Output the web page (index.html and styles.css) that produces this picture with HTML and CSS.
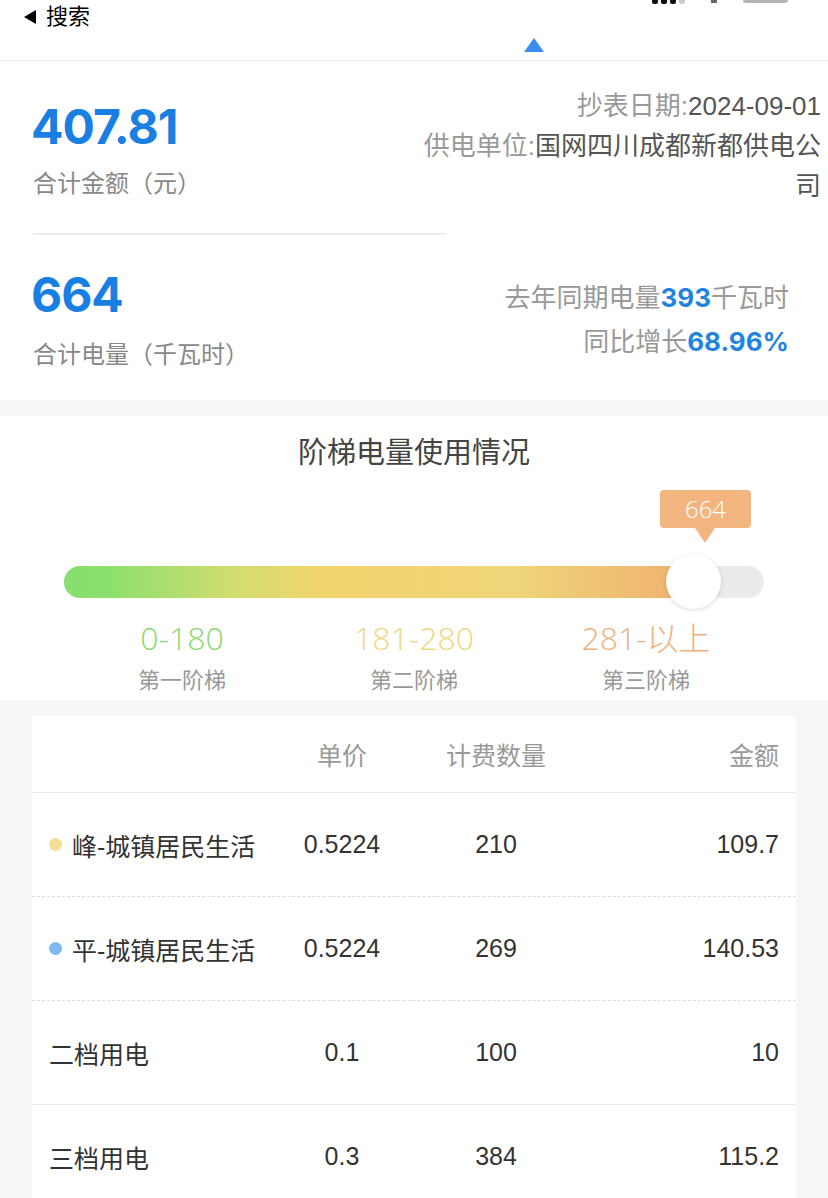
FILE: index.html
```html
<!DOCTYPE html>
<html>
<head>
    <meta charset="utf-8">
    <link rel="stylesheet" href="styles.css">
    <meta name="viewport" content="width=device-width, initial-scale=1.0">
    <title>电费账单</title>
</head>
<body>
    <div class="topbar">
        <div class="status">
            <div class="back"><span class="back-arrow"></span>搜索</div>
            <div class="sys">
                <span class="signal"><i></i><i></i><i></i><i class="off"></i></span>
                <span class="wifi"></span>
                <span class="battery"></span>
            </div>
        </div>
        <div class="pull"><span class="tri"></span></div>
    </div>

    <div class="summary">
        <div class="sum-row first">
            <div class="sum-left">
                <div class="big">407.81</div>
                <div class="cap">合计金额（元）</div>
            </div>
            <div class="sum-right">
                <p><span class="lbl">抄表日期:</span><span class="val">2024-09-01</span></p>
                <p><span class="lbl">供电单位:</span><span class="val">国网四川成都新都供电公司</span></p>
            </div>
        </div>
        <div class="sum-row second">
            <div class="sum-left">
                <div class="big">664</div>
                <div class="cap">合计电量（千瓦时）</div>
            </div>
            <div class="sum-right">
                <p>去年同期电量<b>393</b>千瓦时</p>
                <p>同比增长<b>68.96%</b></p>
            </div>
        </div>
    </div>

    <div class="tier">
        <h2 class="tier-title">阶梯电量使用情况</h2>
        <div class="meter">
            <div class="fill" style="width: 90%;"></div>
            <div class="tip" style="left: calc(90% + 12px);">664</div>
            <div class="knob" style="left: 90%;"></div>
        </div>
        <div class="tier-labels">
            <div class="tier-item t1">
                <div class="range">0-180</div>
                <div class="name">第一阶梯</div>
            </div>
            <div class="tier-item t2">
                <div class="range">181-280</div>
                <div class="name">第二阶梯</div>
            </div>
            <div class="tier-item t3">
                <div class="range">281-以上</div>
                <div class="name">第三阶梯</div>
            </div>
        </div>
    </div>

    <div class="bill">
        <div class="bill-row head">
            <div></div>
            <div class="c">单价</div>
            <div class="c">计费数量</div>
            <div class="r">金额</div>
        </div>
        <div class="bill-row dashed">
            <div class="item"><span class="dot peak"></span>峰-城镇居民生活</div>
            <div class="c">0.5224</div>
            <div class="c">210</div>
            <div class="r">109.7</div>
        </div>
        <div class="bill-row dashed">
            <div class="item"><span class="dot flat"></span>平-城镇居民生活</div>
            <div class="c">0.5224</div>
            <div class="c">269</div>
            <div class="r">140.53</div>
        </div>
        <div class="bill-row">
            <div class="item">二档用电</div>
            <div class="c">0.1</div>
            <div class="c">100</div>
            <div class="r">10</div>
        </div>
        <div class="bill-row last">
            <div class="item">三档用电</div>
            <div class="c">0.3</div>
            <div class="c">384</div>
            <div class="r">115.2</div>
        </div>
    </div>
</body>
</html>
```

FILE: styles.css
```css
body{
    margin: 0;
    background: #f6f6f6;
    font-family: "Liberation Sans", "Noto Sans CJK SC", sans-serif;
    color: #333;
}
p, h2{
    margin: 0;
}

/* top bar */
.topbar{
    background: #fff;
    height: 60px;
    border-bottom: 1px solid #f0f0f0;
}
.status{
    display: flex;
    justify-content: space-between;
    align-items: flex-start;
    padding: 0 40px 0 24px;
    height: 34px;
}
.back{
    display: flex;
    align-items: center;
    margin-top: 3px;
    font-size: 22px;
    line-height: 28px;
    color: #000;
}
.back-arrow{
    width: 0;
    height: 0;
    border-top: 7px solid transparent;
    border-bottom: 7px solid transparent;
    border-right: 12px solid #000;
    margin-right: 10px;
}
.sys{
    display: flex;
    align-items: flex-start;
    gap: 26px;
}
.signal{
    display: flex;
    gap: 3px;
}
.signal i{
    width: 6px;
    height: 4px;
    background: #111;
    border-radius: 0 0 2px 2px;
}
.signal i.off{
    background: #ccc;
}
.wifi{
    width: 6px;
    height: 3px;
    background: #666;
}
.battery{
    width: 45px;
    height: 3px;
    background: #b5b5b5;
    border-radius: 0 0 4px 4px;
}
.pull{
    padding-left: 524px;
    height: 26px;
}
.tri{
    display: block;
    width: 0;
    height: 0;
    margin-top: 4px;
    border-left: 10px solid transparent;
    border-right: 10px solid transparent;
    border-bottom: 14px solid #3a8ef0;
}

/* summary */
.summary{
    background: #fff;
    padding: 0 7px 0 33px;
}
.sum-row{
    display: flex;
    justify-content: space-between;
    align-items: center;
}
.sum-left{
    flex: none;
    width: 413px;
    margin-right: -25px;
}
.first .sum-left{
    padding: 38px 0 32px;
    border-bottom: 2px solid #ececec;
}
.second .sum-left{
    padding: 32px 0 28px;
}
.big{
    font-family: Inter, "Liberation Sans", sans-serif;
    font-size: 48px;
    line-height: 56px;
    font-weight: 700;
    letter-spacing: -1px;
    margin-left: -2px;
    color: #1a7fe2;
}
.cap{
    font-size: 24px;
    line-height: 34px;
    color: #888;
}
.first .cap{
    margin-top: 12px;
}
.second .cap{
    margin-top: 15px;
}
.sum-right{
    flex: none;
    box-sizing: border-box;
    width: 400px;
    text-align: right;
    font-size: 26px;
    color: #999;
}
.first .sum-right{
    line-height: 40px;
    margin-bottom: 4px;
}
.second .sum-right{
    line-height: 44px;
    padding: 4px 32px 0 0;
}
.val{
    color: #555;
}
.sum-right b{
    font-family: Inter, "Liberation Sans", sans-serif;
    font-weight: 700;
    color: #1e84e2;
}

/* tier meter */
.tier{
    background: #fff;
    margin-top: 16px;
    padding: 17px 0 4px;
}
.tier-title{
    text-align: center;
    font-size: 29px;
    line-height: 40px;
    font-weight: normal;
    color: #444;
}
.meter{
    position: relative;
    margin: 93px 64px 0;
    height: 32px;
    border-radius: 16px;
    background: #ebebeb;
}
.fill{
    height: 100%;
    border-radius: 16px 0 0 16px;
    background: linear-gradient(to right, #86df6e 0%, #8ee06e 8%, #d6dc70 28%, #f2d46c 42%, #efd47a 72%, #efc273 86%, #f0b070 100%);
}
.knob{
    position: absolute;
    top: -12px;
    width: 55px;
    height: 55px;
    margin-left: -28px;
    border-radius: 50%;
    background: #fff;
    box-shadow: 0 1px 4px rgba(0, 0, 0, 0.15);
}
.tip{
    position: absolute;
    bottom: 70px;
    width: 91px;
    height: 38px;
    margin-left: -46px;
    border-radius: 4px;
    background: #f2b580;
    color: #fff;
    font-family: "Open Sans", "Liberation Sans", sans-serif;
    font-weight: 300;
    font-size: 24px;
    line-height: 38px;
    text-align: center;
}
.tip::after{
    content: "";
    position: absolute;
    top: 38px;
    left: 35px;
    border-left: 10px solid transparent;
    border-right: 10px solid transparent;
    border-top: 15px solid #f2b580;
}
.tier-labels{
    display: grid;
    grid-template-columns: 1fr 1fr 1fr;
    padding: 0 66px;
    margin-top: 20px;
    text-align: center;
}
.range{
    font-family: "Open Sans", "Noto Sans CJK SC", sans-serif;
    font-size: 32px;
    line-height: 40px;
    font-weight: 300;
}
.name{
    margin-top: 8px;
    font-size: 22px;
    line-height: 30px;
    color: #999;
}
.t1 .range{
    color: #8ad872;
}
.t2 .range{
    color: #f0d880;
}
.t3 .range{
    color: #f2b07c;
}

/* bill table */
.bill{
    margin: 16px 32px 0;
    background: #fff;
    padding: 0 17px;
}
.bill-row{
    display: grid;
    grid-template-columns: 216px 154px 154px 1fr;
    align-items: center;
    height: 103px;
    font-size: 25px;
    color: #333;
    border-bottom: 1px solid #e8e8e8;
    margin: 0 -17px;
    padding: 0 17px;
}
.bill-row.head{
    height: 76px;
    color: #999;
}
.bill-row.dashed{
    border-bottom: 1px dashed #dcdcdc;
}
.bill-row.last{
    border-bottom: none;
}
.c{
    text-align: center;
}
.r{
    text-align: right;
}
.item{
    display: flex;
    align-items: center;
    white-space: nowrap;
}
.dot{
    width: 13px;
    height: 13px;
    border-radius: 50%;
    margin-right: 10px;
}
.dot.peak{
    background: #f2df95;
}
.dot.flat{
    background: #80b8f0;
}
```
